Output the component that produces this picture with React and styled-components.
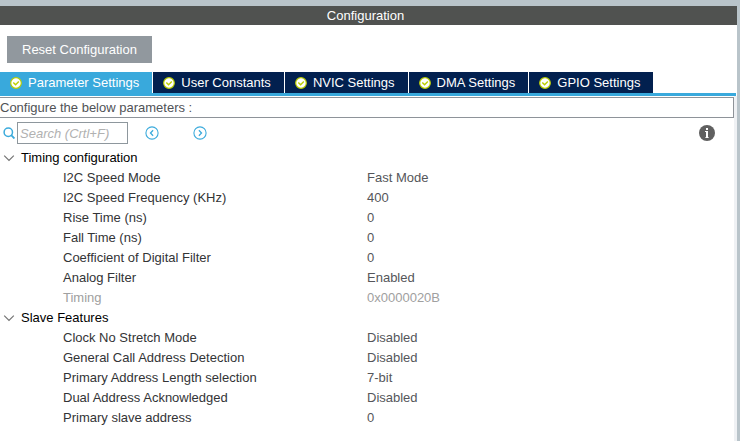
import React, { useState } from "react";
import styled, { createGlobalStyle } from "styled-components";

const GlobalStyle = createGlobalStyle`
  *, *::before, *::after { box-sizing: border-box; }
  body {
    margin: 0;
    background: #ffffff;
    font-family: "Liberation Sans", Arial, sans-serif;
    font-size: 13px;
    line-height: 20px;
    color: #333436;
  }
  button, input { font: inherit; }
`;

const Window = styled.div`
  display: flex;
  flex-direction: column;
  min-height: 100vh;
  border-top: 6px solid #b9c4ca;
  border-right: 3px solid #b9c4ca;
  overflow: hidden;
`;

const TitleBar = styled.h1`
  margin: 0;
  padding-right: 6px;
  background: #505250;
  color: #ffffff;
  font-size: 13px;
  font-weight: 400;
  line-height: 19px;
  text-align: center;
`;

const Toolbar = styled.div`
  padding: 11px 7px 9px;
  line-height: 0;
`;

const ResetButton = styled.button`
  padding: 0 15px;
  border: 0;
  background: #91989e;
  color: #ffffff;
  line-height: 27px;
`;

const TabBar = styled.div`
  display: flex;
  gap: 1px;
  margin-right: 1px;
  border-bottom: 3px solid #39a9dc;
`;

const Tab = styled.button`
  display: flex;
  align-items: center;
  gap: 6px;
  padding: 0 13px 0 10px;
  border: 0;
  background: ${(p) => (p["aria-selected"] ? "#39a9dc" : "#02204f")};
  color: #ffffff;
  line-height: 21px;
  white-space: nowrap;
`;

const Panel = styled.div`
  flex: 1;
  padding-top: 1px;
  border-right: 3px solid #eff1f4;
`;

const Hint = styled.p`
  margin: 0;
  border: 1px solid #8e9399;
  border-left: 0;
  line-height: 19px;
  color: #505256;
`;

const SearchBar = styled.div`
  display: flex;
  align-items: center;
  padding: 4px 19px 4px 3px;
`;

const SearchLabel = styled.label`
  display: flex;
  width: 14px;
`;

const SearchInput = styled.input`
  width: 111px;
  height: 22px;
  margin-right: 17px;
  padding: 0 2px;
  border: 1px solid #8e979d;
  border-radius: 0;
  color: #333436;
  font-style: italic;
  &::placeholder { color: #b1b1b1; opacity: 1; }
`;

const IconButton = styled.button`
  display: flex;
  padding: 0;
  border: 0;
  background: none;
  color: #3cabdc;
  margin-right: ${(p) => (p.$spaced ? "34px" : "0")};
`;

const InfoButton = styled(IconButton)`
  margin-left: auto;
  color: #606060;
`;

const Parameters = styled.table`
  width: 100%;
  border-collapse: collapse;
  table-layout: fixed;
`;

const NameColumn = styled.col`
  width: 367px;
`;

const GroupHead = styled.th`
  padding: 0 0 0 3px;
  font-weight: 400;
  text-align: left;
`;

const GroupToggle = styled.button`
  display: flex;
  align-items: center;
  gap: 6px;
  padding: 0;
  border: 0;
  background: none;
  color: #000000;
  line-height: 20px;
`;

const ParameterRow = styled.tr`
  color: ${(p) => (p.$disabled ? "#a0a0a0" : "#333436")};
`;

const ParameterName = styled.th`
  padding: 0 0 0 63px;
  font-weight: 400;
  text-align: left;
`;

const ParameterValue = styled.td`
  padding: 0;
  color: ${(p) => (p.$disabled ? "#a0a0a0" : "#55565a")};
`;

const CheckIcon = () => (
  <svg width="12" height="12" viewBox="0 0 12 12" aria-hidden="true">
    <circle cx="6" cy="6" r="5.3" fill="#fff" stroke="#bccf00" strokeWidth="1.2" />
    <path d="M3.3 5.4 5.6 7.7 8.8 4.5" fill="none" stroke="#bccf00" strokeWidth="1.4" />
  </svg>
);

const SearchIcon = () => (
  <svg width="12" height="12" viewBox="0 0 12 12" fill="none" stroke="#3cabdc" strokeWidth="1.5" aria-hidden="true">
    <circle cx="5.3" cy="5.3" r="4.2" />
    <path d="m8.2 8.2 3.2 3.3" strokeWidth="1.8" />
  </svg>
);

const ArrowIcon = ({ next }) => (
  <svg width="14" height="14" viewBox="0 0 14 14" fill="none" stroke="currentColor" strokeWidth="1.1" aria-hidden="true">
    <circle cx="7" cy="7" r="6.1" />
    <path d={next ? "M5.9 4.3 8.5 7 5.9 9.7" : "M8.1 4.3 5.5 7 8.1 9.7"} strokeWidth="1.3" />
  </svg>
);

const InfoIcon = () => (
  <svg width="16" height="16" viewBox="0 0 16 16" aria-hidden="true">
    <circle cx="8" cy="8" r="8" fill="currentColor" />
    <path d="M7 3h2v2H7zM6 6h3v7H7V7H6z" fill="#fff" />
    <path d="M6 12h4v1H6z" fill="#fff" opacity="0.6" />
  </svg>
);

const ChevronIcon = ({ open }) => (
  <svg width="12" height="12" viewBox="0 0 12 12" fill="none" stroke="#747474" strokeWidth="1.2" aria-hidden="true">
    <path d={open ? "M1.2 3.6 6 8.4 10.8 3.6" : "M3.6 1.2 8.4 6 3.6 10.8"} />
  </svg>
);

const TABS = [
  "Parameter Settings",
  "User Constants",
  "NVIC Settings",
  "DMA Settings",
  "GPIO Settings",
];

const GROUPS = [
  {
    title: "Timing configuration",
    rows: [
      { name: "I2C Speed Mode", value: "Fast Mode" },
      { name: "I2C Speed Frequency (KHz)", value: "400" },
      { name: "Rise Time (ns)", value: "0" },
      { name: "Fall Time (ns)", value: "0" },
      { name: "Coefficient of Digital Filter", value: "0" },
      { name: "Analog Filter", value: "Enabled" },
      { name: "Timing", value: "0x0000020B", disabled: true },
    ],
  },
  {
    title: "Slave Features",
    rows: [
      { name: "Clock No Stretch Mode", value: "Disabled" },
      { name: "General Call Address Detection", value: "Disabled" },
      { name: "Primary Address Length selection", value: "7-bit" },
      { name: "Dual Address Acknowledged", value: "Disabled" },
      { name: "Primary slave address", value: "0" },
    ],
  },
];

function ParameterGroup({ title, rows }) {
  const [open, setOpen] = useState(true);
  return (
    <tbody>
      <tr>
        <GroupHead colSpan={2} scope="rowgroup">
          <GroupToggle type="button" aria-expanded={open} onClick={() => setOpen(!open)}>
            <ChevronIcon open={open} />
            {title}
          </GroupToggle>
        </GroupHead>
      </tr>
      {open &&
        rows.map((row) => (
          <ParameterRow key={row.name} $disabled={row.disabled}>
            <ParameterName scope="row">{row.name}</ParameterName>
            <ParameterValue $disabled={row.disabled}>{row.value}</ParameterValue>
          </ParameterRow>
        ))}
    </tbody>
  );
}

export default function App() {
  const [active, setActive] = useState(TABS[0]);
  return (
    <>
      <GlobalStyle />
      <Window>
        <TitleBar>Configuration</TitleBar>
        <Toolbar>
          <ResetButton type="button">Reset Configuration</ResetButton>
        </Toolbar>
        <TabBar role="tablist">
          {TABS.map((name) => (
            <Tab
              key={name}
              type="button"
              role="tab"
              aria-selected={name === active}
              onClick={() => setActive(name)}
            >
              <CheckIcon />
              {name}
            </Tab>
          ))}
        </TabBar>
        <Panel role="tabpanel" aria-label={active}>
          <Hint>Configure the below parameters :</Hint>
          <SearchBar>
            <SearchLabel htmlFor="search" aria-label="Search">
              <SearchIcon />
            </SearchLabel>
            <SearchInput id="search" type="text" placeholder="Search (Crtl+F)" />
            <IconButton type="button" aria-label="Previous match" $spaced>
              <ArrowIcon />
            </IconButton>
            <IconButton type="button" aria-label="Next match">
              <ArrowIcon next />
            </IconButton>
            <InfoButton type="button" aria-label="Information">
              <InfoIcon />
            </InfoButton>
          </SearchBar>
          <Parameters>
            <colgroup>
              <NameColumn />
              <col />
            </colgroup>
            {GROUPS.map((group) => (
              <ParameterGroup key={group.title} {...group} />
            ))}
          </Parameters>
        </Panel>
      </Window>
    </>
  );
}
